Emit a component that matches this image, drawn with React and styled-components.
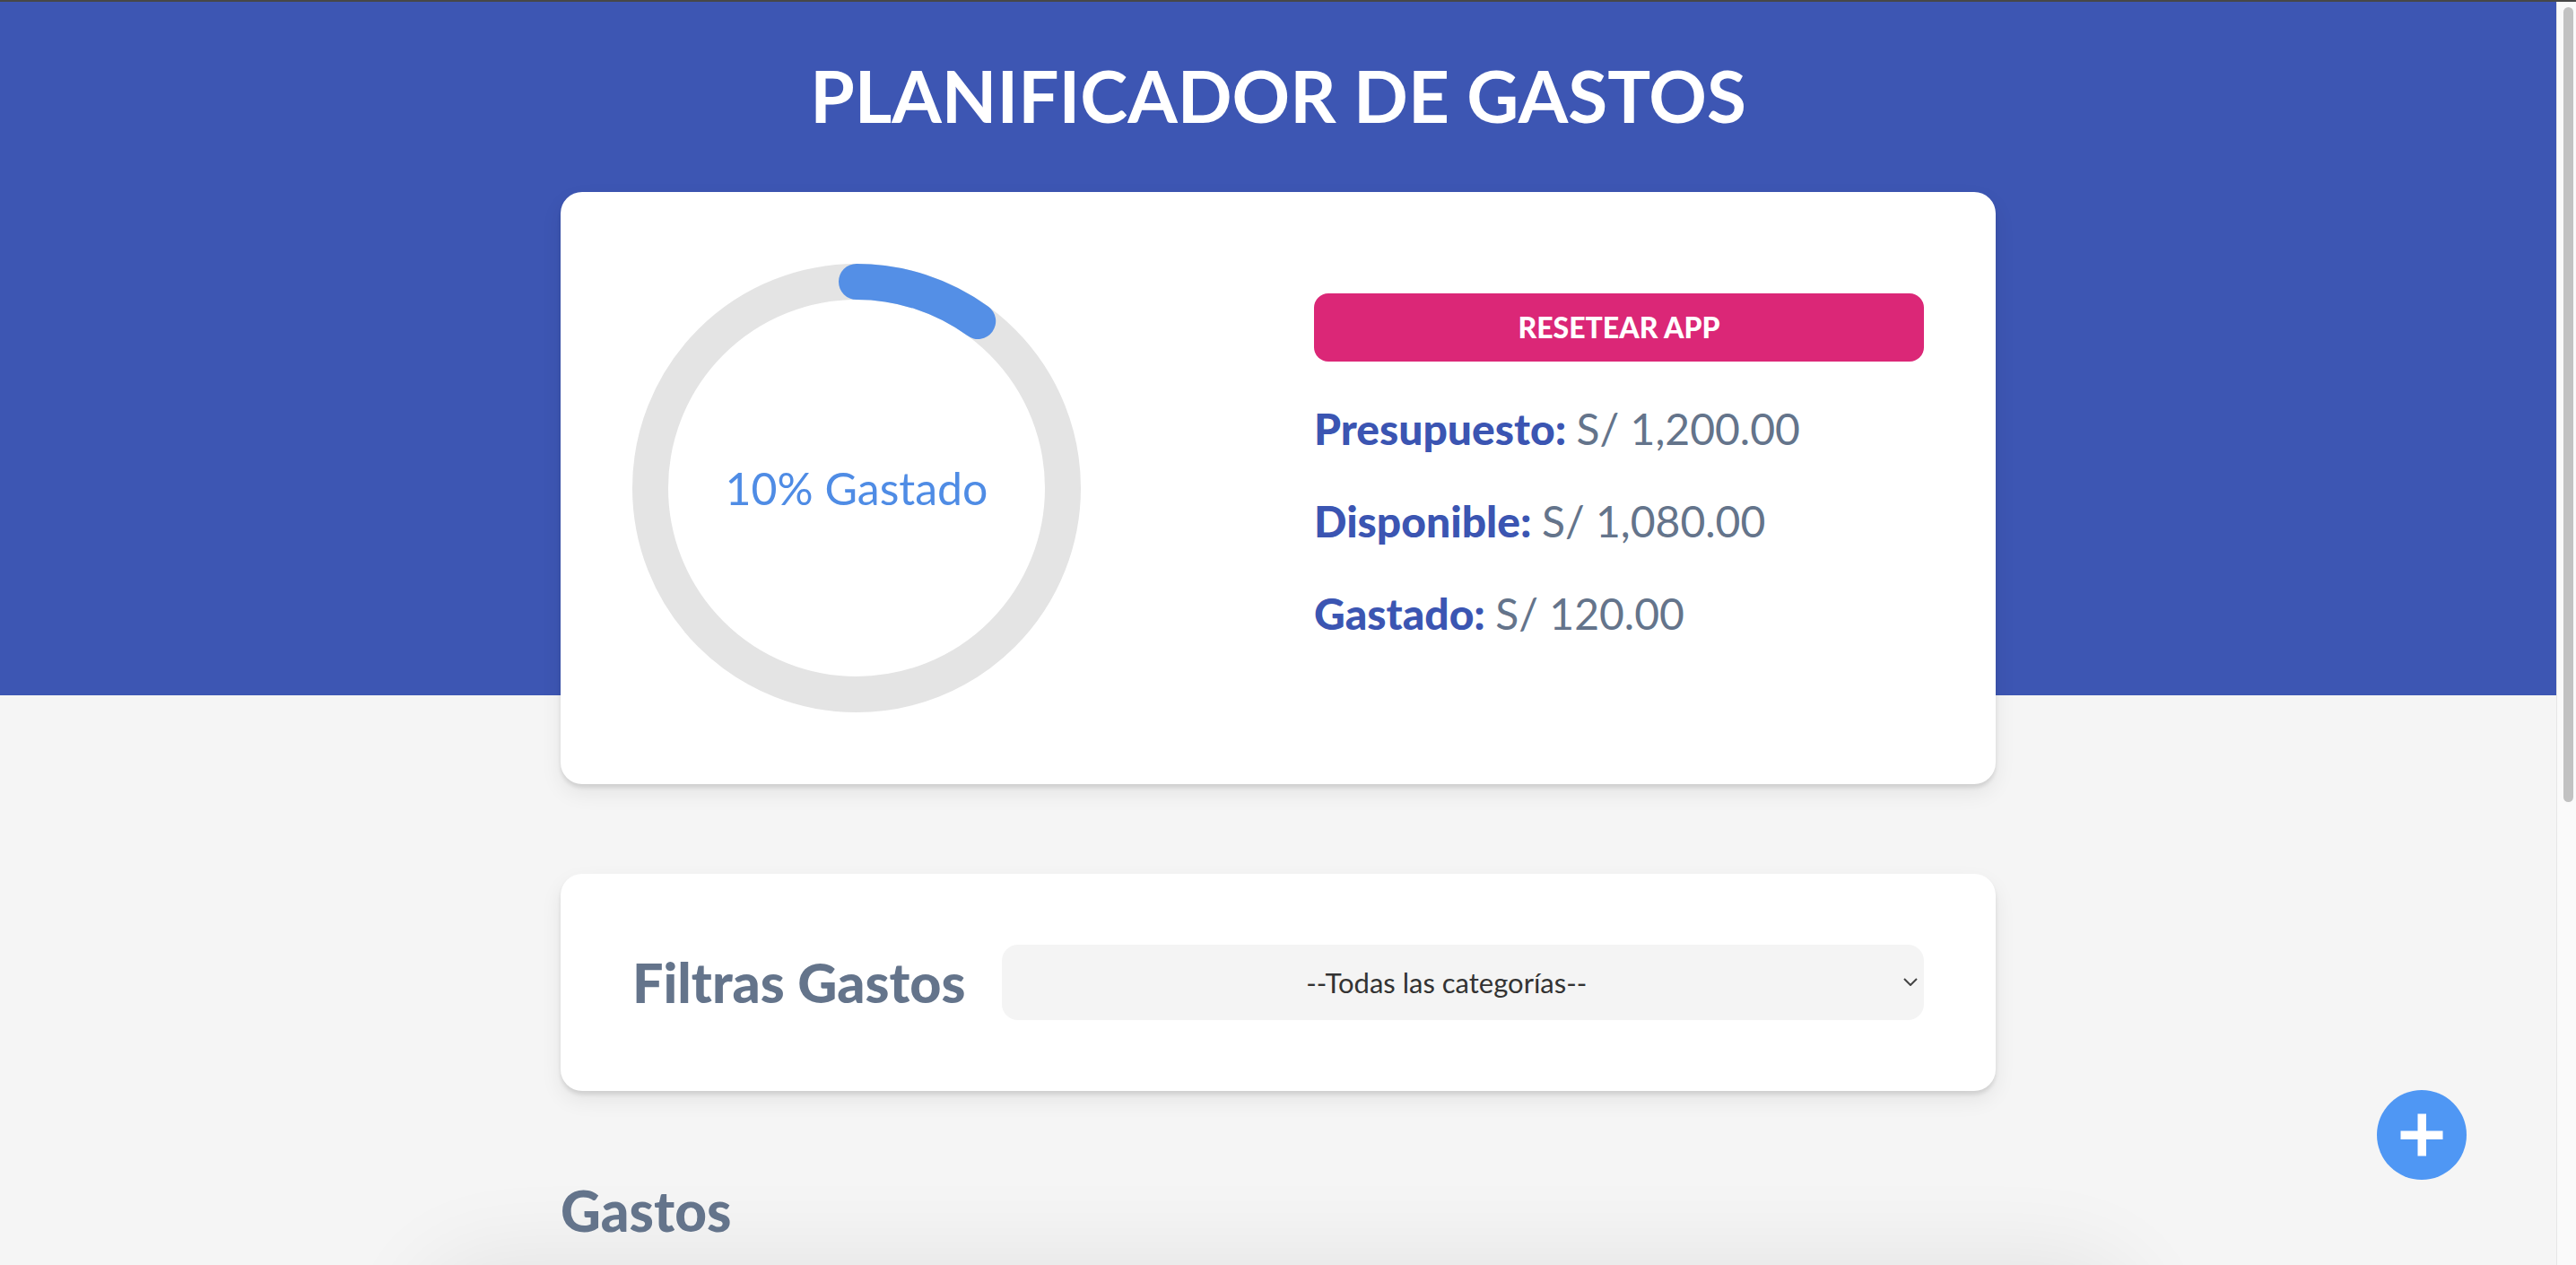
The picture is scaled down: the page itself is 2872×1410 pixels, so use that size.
import React, { useState } from 'react'
import styled, { createGlobalStyle } from 'styled-components';

const GlobalStyle = createGlobalStyle`
html, body {
  background: #f5f5f5;
}
body {
  margin: 0;
  font-family: Lato, "Noto Sans", "Liberation Sans", sans-serif;
}
* {
  box-sizing: border-box;
}
`;

const presupuesto = 1200;
const gastos = [
  { id: 1, nombre: 'Supermercado', cantidad: 120, categoria: 'Comida', fecha: '12 de marzo de 2024' },
];

const formatear = (cantidad) =>
  'S/ ' + cantidad.toLocaleString('en-US', { minimumFractionDigits: 2, maximumFractionDigits: 2 });

const Progreso = ({ porcentaje }) => {
  const r = 46;
  const largo = 2 * Math.PI * r;
  return (
    <Anillo viewBox="0 0 100 100">
      <circle cx="50" cy="50" r={r} fill="none" stroke="#e4e4e4" strokeWidth="8" />
      <path
        d={`M 50,50 m 0,-${r} a ${r},${r} 0 1 1 0,${2 * r} a ${r},${r} 0 1 1 0,-${2 * r}`}
        fill="none"
        stroke="#548fe6"
        strokeWidth="8"
        strokeLinecap="round"
        strokeDasharray={`${largo} ${largo}`}
        strokeDashoffset={largo * (1 - porcentaje / 100)}
      />
      <text x="50" y="50" textAnchor="middle" dominantBaseline="central">
        {porcentaje}% Gastado
      </text>
    </Anillo>
  );
};

const App = () => {
  const [filtro, setFiltro] = useState('');
  const gastado = gastos.reduce((t, g) => t + g.cantidad, 0);
  const disponible = presupuesto - gastado;
  const porcentaje = Math.round((gastado / presupuesto) * 100);

  return (
    <Pagina>
      <GlobalStyle />
      <Contenido>
        <Header>
          <Titulo>Planificador de Gastos</Titulo>
          <TarjetaPresupuesto>
            <ColumnaGrafico>
              <Progreso porcentaje={porcentaje} />
            </ColumnaGrafico>
            <ColumnaDatos>
              <BotonReset type="button">Resetear App</BotonReset>
              <Dato>
                <span>Presupuesto: </span>{formatear(presupuesto)}
              </Dato>
              <Dato>
                <span>Disponible: </span>{formatear(disponible)}
              </Dato>
              <Dato>
                <span>Gastado: </span>{formatear(gastado)}
              </Dato>
            </ColumnaDatos>
          </TarjetaPresupuesto>
        </Header>

        <Main>
          <TarjetaFiltro>
            <Etiqueta htmlFor="filtro">Filtras Gastos</Etiqueta>
            <CampoSelect>
              <Select id="filtro" value={filtro} onChange={(e) => setFiltro(e.target.value)}>
                <option value="">--Todas las categorías--</option>
                <option value="ahorro">Ahorro</option>
                <option value="comida">Comida</option>
                <option value="casa">Casa</option>
                <option value="gastos">Gastos Varios</option>
                <option value="ocio">Ocio</option>
                <option value="salud">Salud</option>
                <option value="suscripciones">Suscripciones</option>
              </Select>
              <Flecha viewBox="0 0 16 9">
                <path d="M1 1 L8 8 L15 1" fill="none" stroke="#444" strokeWidth="2" />
              </Flecha>
            </CampoSelect>
          </TarjetaFiltro>

          <Listado>
            <Subtitulo>Gastos</Subtitulo>
            {gastos.map((g) => (
              <Gasto key={g.id}>
                <div>
                  <Categoria>{g.categoria}</Categoria>
                  <NombreGasto>{g.nombre}</NombreGasto>
                  <Fecha>Agregado el: <span>{g.fecha}</span></Fecha>
                </div>
                <Cantidad>{formatear(g.cantidad)}</Cantidad>
              </Gasto>
            ))}
          </Listado>
        </Main>
      </Contenido>

      <BarraScroll>
        <Pulgar />
      </BarraScroll>

      <BotonNuevo type="button" aria-label="Nuevo gasto">
        <svg viewBox="0 0 100 100">
          <circle cx="50" cy="50" r="50" fill="#4f97f4" />
          <rect x="26.5" y="45.5" width="47" height="9.5" fill="#fff" />
          <rect x="45.5" y="26.5" width="9.5" height="47" fill="#fff" />
        </svg>
      </BotonNuevo>
    </Pagina>
  );
};

export default App;

const Pagina = styled.div`
display: grid;
grid-template-columns: minmax(0, 1fr) 22px;
border-top: 2px solid #474747;
min-height: 100vh;
`;

const Contenido = styled.div`
min-width: 0;
padding-bottom: 300px;
`;

const BarraScroll = styled.div`
position: sticky;
top: 0;
align-self: start;
height: calc(100vh - 2px);
background: #fafafa;
border-left: 1px solid #e6e6e6;
padding: 6px 3px 0 7px;
`;

const Pulgar = styled.div`
height: 886px;
border-radius: 6px;
background: #c2c2c2;
`;

const Header = styled.header`
background: #3d56b3;
height: 773px;
padding: 0 20px;
`;

const Titulo = styled.h1`
margin: 0;
padding: 56px 0 60px;
color: #fff;
text-align: center;
text-transform: uppercase;
font-size: 80px;
font-weight: 700;
line-height: normal;
`;

const Tarjeta = styled.div`
max-width: 1600px;
margin: 0 auto;
background: #fff;
border-radius: 24px;
box-shadow: 0 4px 4px rgba(0,0,0,.10), 0 10px 24px rgba(0,0,0,.07);
`;

const TarjetaPresupuesto = styled(Tarjeta)`
display: grid;
grid-template-columns: 1fr 1fr;
gap: 80px;
padding: 80px;
`;

const ColumnaGrafico = styled.div`
display: flex;
`;

const Anillo = styled.svg`
width: 500px;
height: 500px;
text {
  fill: #4f8ce5;
  font-size: 10px;
  font-family: Lato, "Noto Sans", sans-serif;
}
`;

const ColumnaDatos = styled.div`
display: flex;
flex-direction: column;
gap: 46px;
padding-top: 33px;
`;

const BotonReset = styled.button`
background: #db2777;
color: #fff;
border: none;
border-radius: 16px;
padding: 20px;
font-family: Lato, "Noto Sans", sans-serif;
font-size: 32px;
line-height: 36px;
font-weight: 900;
text-transform: uppercase;
cursor: pointer;
`;

const Dato = styled.p`
margin: 0;
font-size: 48px;
line-height: normal;
color: #64748b;
span {
  color: #3b55b2;
  font-weight: 900;
}
`;

const Main = styled.main`
padding: 199px 20px 0;
`;

const TarjetaFiltro = styled(Tarjeta)`
display: flex;
align-items: center;
gap: 40px;
padding: 79px 80px;
`;

const Etiqueta = styled.label`
font-size: 61px;
font-weight: 900;
color: #64748b;
line-height: 72px;
`;

const CampoSelect = styled.div`
flex: 1;
position: relative;
`;

const Select = styled.select`
appearance: none;
display: block;
width: 100%;
height: 84px;
padding: 0 36px 0 0;
border: none;
border-radius: 18px;
background: #f4f4f4;
text-align: center;
text-align-last: center;
font-family: Lato, "Noto Sans", sans-serif;
font-size: 31px;
color: #333;
`;

const Flecha = styled.svg`
position: absolute;
right: 7px;
top: 37px;
width: 16px;
height: 9px;
pointer-events: none;
`;

const Listado = styled.section`
max-width: 1600px;
margin: 96px auto 0;
`;

const Subtitulo = styled.h2`
margin: 0 0 175px;
font-size: 62px;
font-weight: 900;
color: #64748b;
line-height: normal;
`;

const Gasto = styled.div`
display: flex;
justify-content: space-between;
align-items: center;
background: #fff;
border-radius: 24px;
padding: 60px 80px;
box-shadow: 0 0 100px 160px rgba(0,0,0,.075);
`;

const Categoria = styled.p`
margin: 0 0 10px;
font-size: 32px;
font-weight: 900;
text-transform: uppercase;
color: #94a3b8;
`;

const NombreGasto = styled.p`
margin: 0 0 10px;
font-size: 44px;
font-weight: 700;
color: #4b5563;
`;

const Fecha = styled.p`
margin: 0;
font-size: 32px;
font-weight: 900;
color: #64748b;
span {
  font-weight: 400;
}
`;

const Cantidad = styled.p`
margin: 0;
font-size: 60px;
font-weight: 900;
color: #3b55b2;
`;

const BotonNuevo = styled.button`
position: fixed;
right: 122px;
bottom: 95px;
width: 100px;
height: 100px;
padding: 0;
border: none;
background: none;
cursor: pointer;
svg {
  width: 100%;
  height: 100%;
  display: block;
}
`;
